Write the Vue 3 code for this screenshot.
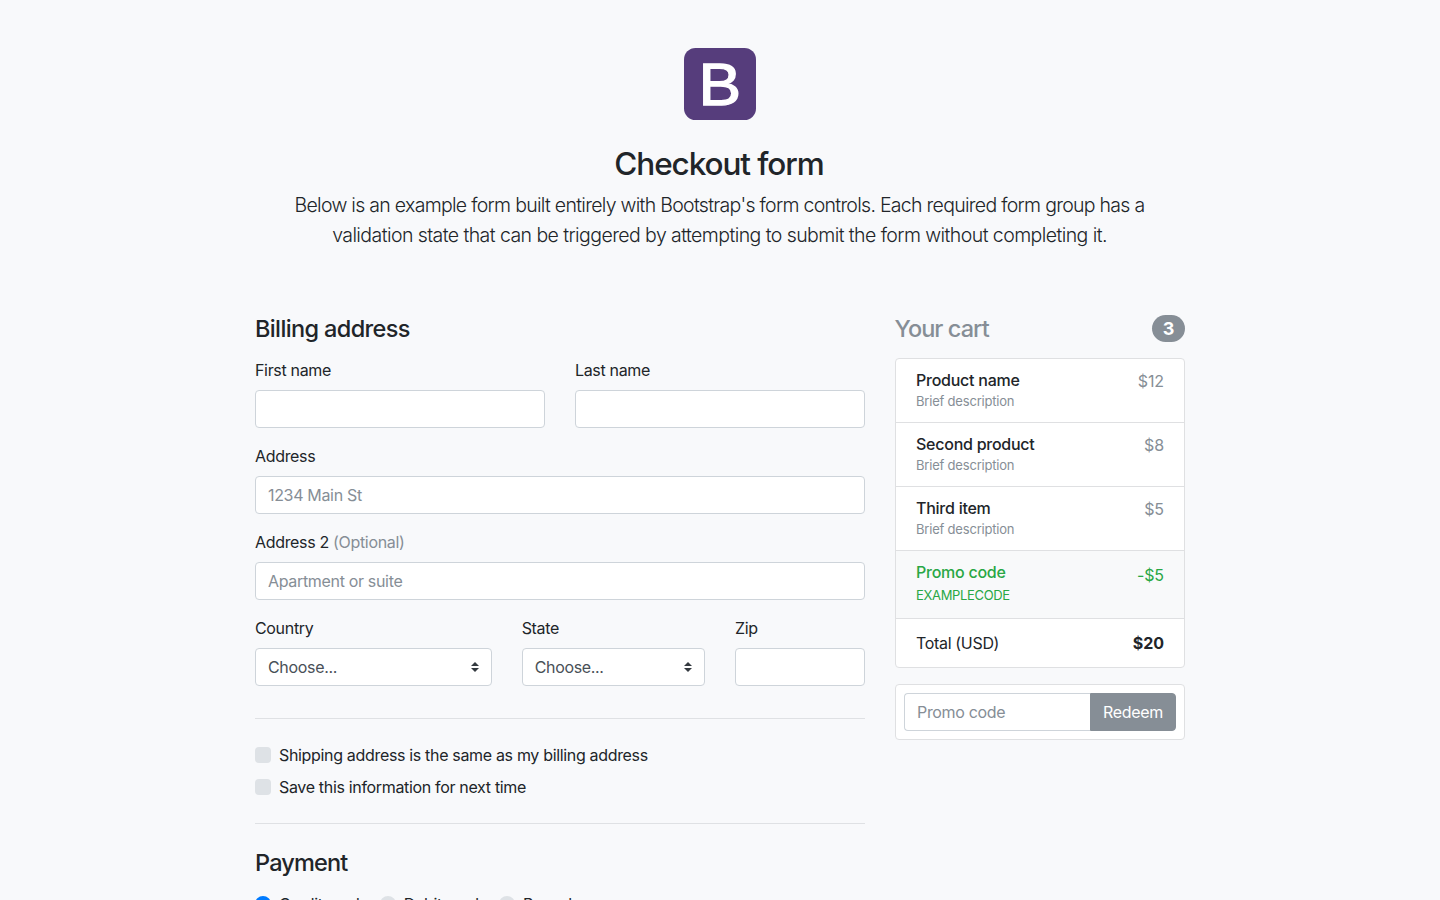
<script setup>
import { ref } from 'vue'

const products = [
  { name: 'Product name', note: 'Brief description', price: '$12' },
  { name: 'Second product', note: 'Brief description', price: '$8' },
  { name: 'Third item', note: 'Brief description', price: '$5' },
]
const methods = ['Credit card', 'Debit card', 'Paypal']
const method = ref('Credit card')
</script>

<template>
  <div class="page">
    <div class="container">
      <header class="intro">
        <svg class="logo" viewBox="0 0 72 72" width="72" height="72">
          <rect width="72" height="72" rx="11.5" fill="#563d7c" />
          <text class="mark" transform="translate(14.4 57.4) scale(1.065 1)">B</text>
        </svg>
        <h2>Checkout form</h2>
        <p class="lead">
          <span class="l1">Below is an example form built entirely with Bootstrap's form controls. Each required form group has a</span><br>
          <span class="l2">validation state that can be triggered by attempting to submit the form without completing it.</span>
        </p>
      </header>

      <div class="columns">
        <form class="billing" @submit.prevent>
          <h4>Billing address</h4>
          <div class="row">
            <div class="field half">
              <label for="first">First name</label>
              <input id="first" type="text">
            </div>
            <div class="field half">
              <label for="last">Last name</label>
              <input id="last" type="text">
            </div>
          </div>
          <div class="field">
            <label for="address">Address</label>
            <input id="address" type="text" placeholder="1234 Main St">
          </div>
          <div class="field">
            <label for="address2">Address 2 <span class="muted">(Optional)</span></label>
            <input id="address2" type="text" placeholder="Apartment or suite">
          </div>
          <div class="row places">
            <div class="field">
              <label for="country">Country</label>
              <div class="select">
                <select id="country"><option>Choose...</option><option>United States</option></select>
                <svg viewBox="0 0 4 5" width="8" height="10"><path fill="#343a40" d="M2 0L0 2h4zm0 5L0 3h4z" /></svg>
              </div>
            </div>
            <div class="field">
              <label for="state">State</label>
              <div class="select">
                <select id="state"><option>Choose...</option><option>California</option></select>
                <svg viewBox="0 0 4 5" width="8" height="10"><path fill="#343a40" d="M2 0L0 2h4zm0 5L0 3h4z" /></svg>
              </div>
            </div>
            <div class="field">
              <label for="zip">Zip</label>
              <input id="zip" type="text">
            </div>
          </div>
          <hr class="first-rule">
          <label class="check"><input type="checkbox"><span>Shipping address is the same as my billing address</span></label>
          <label class="check"><input type="checkbox"><span>Save this information for next time</span></label>
          <hr>
          <h4 class="payment-title">Payment</h4>
          <div class="methods">
            <label v-for="m in methods" :key="m" class="radio">
              <input v-model="method" type="radio" name="method" :value="m"><span>{{ m }}</span>
            </label>
          </div>
        </form>

        <aside class="cart">
          <h4 class="cart-title"><span>Your cart</span><span class="badge">3</span></h4>
          <ul class="items">
            <li v-for="p in products" :key="p.name">
              <div><h6>{{ p.name }}</h6><small>{{ p.note }}</small></div>
              <span class="price">{{ p.price }}</span>
            </li>
            <li class="promo">
              <div><h6>Promo code</h6><small>EXAMPLECODE</small></div>
              <span class="price">-$5</span>
            </li>
            <li class="total"><span>Total (USD)</span><strong>$20</strong></li>
          </ul>
          <form class="redeem" @submit.prevent>
            <input type="text" placeholder="Promo code">
            <button type="submit">Redeem</button>
          </form>
        </aside>
      </div>
    </div>
  </div>
</template>

<style>
html, body { background: #f8f9fb; overflow: hidden; height: 100%; }
</style>

<style scoped>
* { box-sizing: border-box; }
.page {
  height: 900px; overflow: hidden; background: #f8f9fb; color: #212529;
  font-family: Inter, "Liberation Sans", sans-serif;
  font-size: 16px; line-height: 24px; letter-spacing: -0.33px;
}
.container { width: 930px; margin: 0 auto; }
.intro { padding-top: 48px; text-align: center; height: 314.4px; }
.logo { display: block; margin: 0 auto 24px; }
.mark { font: 60px "Liberation Sans", Arial, sans-serif; letter-spacing: 0; fill: #fff; stroke: #fff; stroke-width: 1.3px; }
h2, h4, h6 { margin: 0; font-weight: 500; }
h2 { font-size: 31.5px; line-height: 38.4px; padding-top: 1px; margin: 0 0 7px -2px; letter-spacing: -1.08px; }
.lead { margin: 0 0 0 -1px; font-size: 19.5px; font-weight: 300; line-height: 30px; white-space: nowrap; }
.l1 { letter-spacing: -0.71px; }
.l2 { letter-spacing: -0.57px; }
.columns { display: flex; gap: 30px; align-items: flex-start; }
.billing { width: 610px; }
.cart { width: 290px; }
h4 { font-size: 23.5px; line-height: 28px; padding-top: 1px; margin-bottom: 15px; letter-spacing: -0.63px; }
.payment-title { letter-spacing: -0.83px; }
.row { display: flex; gap: 30px; }
.half { flex: 1; }
.places { display: grid; grid-template-columns: 236.67px 183.33px 130px; }
.field { margin-bottom: 16px; }
.field > label { display: block; margin-bottom: 8px; }
.muted { color: #868e96; }
input, select, button { font: inherit; letter-spacing: inherit; margin: 0; }
input[type="text"], select {
  display: block; width: 100%; height: 38px; padding: 6px 12px;
  border: 1px solid #ced4da; border-radius: 4px; background: #fff; color: #495057; outline: none;
}
input::placeholder { color: #868e96; opacity: 1; }
.select { position: relative; }
select { appearance: none; }
.select svg { position: absolute; right: 13px; top: 14px; }
hr { border: 0; border-top: 1px solid #dfe1e4; margin: 24px 0; }
.first-rule { margin-top: 16px; }
.check { display: flex; gap: 8px; margin-bottom: 8px; }
.check:has(+ hr) { margin-bottom: 0; }
.check input, .radio input {
  appearance: none; flex: none; width: 16px; height: 16px; margin-top: 4px; border-radius: 4px; background: #dee2e6;
}
.methods { display: flex; gap: 20.4px; }
.radio { display: flex; gap: 8px; }
.radio input { border-radius: 50%; }
.radio input:checked { background: radial-gradient(circle, #fff 3px, #007bff 3.5px); }
.cart-title { display: flex; justify-content: space-between; align-items: center; color: #868e96; letter-spacing: -0.93px; }
.cart-title span:first-child { margin-left: -0.5px; }
.badge {
  width: 33px; height: 27px; margin-bottom: 1px; border-radius: 14px; background: #868e96; color: #fff;
  font-size: 18px; font-weight: 700; line-height: 27px; text-align: center; letter-spacing: 0;
}
.items { list-style: none; margin: 0 0 16px; padding: 0; border: 1px solid #dfe0e2; border-radius: 4px; background: #fff; overflow: hidden; }
.items li { display: flex; justify-content: space-between; height: 64px; padding: 12px 20px; border-bottom: 1px solid #dfe0e2; }
h6 { font-size: 16px; line-height: 19px; letter-spacing: -0.25px; }
small { display: block; font-size: 13px; line-height: 22px; letter-spacing: -0.2px; color: #868e96; }
.price { color: #868e96; line-height: 20px; letter-spacing: -0.1px; }
.items .promo { height: 68px; background: #f8f9fa; color: #28a745; }
.promo small { line-height: 26px; letter-spacing: -0.34px; }
.promo small, .promo .price { color: #28a745; }
.promo .price { line-height: 25px; }
.items .total { height: 48px; border-bottom: 0; }
.total strong { letter-spacing: -0.05px; }
.redeem { display: flex; padding: 8px; border: 1px solid #dfe0e2; border-radius: 4px; background: #fff; }
.redeem input[type="text"] { flex: 1; min-width: 0; border-right: 0; border-radius: 4px 0 0 4px; }
.redeem button { width: 86px; height: 38px; padding: 0; border: 1px solid #868e96; border-radius: 0 4px 4px 0; background: #868e96; color: #fff; }
</style>
